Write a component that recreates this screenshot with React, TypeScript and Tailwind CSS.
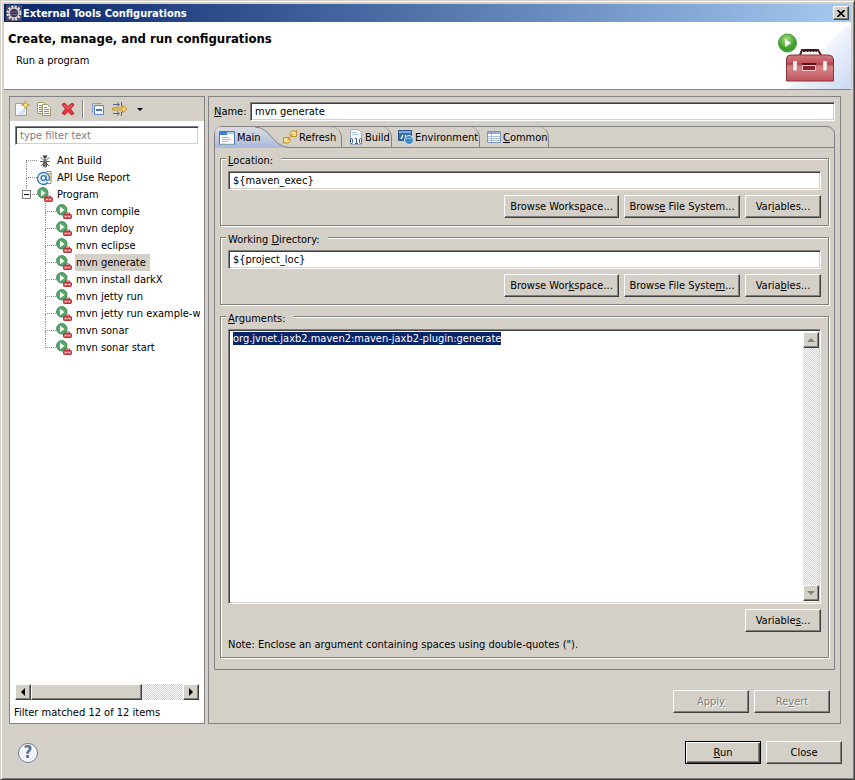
import { useEffect, useRef, type ReactNode } from "react";
import { clsx } from "clsx";

const raised = "border border-t-white border-l-white border-r-[#404040] border-b-[#404040] bg-[#d4d0c8] shadow-[inset_-1px_-1px_0_#808080]";
const sunken = "border border-t-[#808080] border-l-[#808080] border-r-white border-b-white bg-white shadow-[inset_1px_1px_0_#404040,inset_-1px_-1px_0_#d4d0c8]";
const track = "bg-[repeating-conic-gradient(#fff_0%_25%,#d4d0c8_0%_50%)] bg-[length:2px_2px]";

// Puts the underline under the letter at `at`, as the access key.
function Mnemonic({ text, at }: { text: string; at?: number }) {
  if (at === undefined) return <>{text}</>;
  return <>{text.slice(0, at)}<u className="underline-offset-1">{text[at]}</u>{text.slice(at + 1)}</>;
}

function Button({ text, at, className, primary, disabled }: { text: string; at?: number; className?: string; primary?: boolean; disabled?: boolean }) {
  return (
    <button
      type="button"
      disabled={disabled}
      className={clsx(
        "h-[23px] shrink-0 whitespace-nowrap",
        primary ? "border border-black bg-[#d4d0c8] shadow-[inset_1px_1px_0_#fff,inset_-1px_-1px_0_#404040,inset_-2px_-2px_0_#808080]" : raised,
        disabled && "text-[#808080] [text-shadow:1px_1px_0_#fff]",
        className ?? "w-[76px]",
      )}
    >
      <Mnemonic text={text} at={at} />
    </button>
  );
}

function Icon({ children, className }: { children: ReactNode; className?: string }) {
  return <svg aria-hidden="true" viewBox="0 0 16 16" className={clsx("size-4 shrink-0", className)}>{children}</svg>;
}

function NewIcon() {
  return (
    <Icon>
      <path d="M1.500 2.500h8l3 3v9h-11z" fill="#f4f8fd" stroke="#a89f7c" />
      <path d="M3 13.500h8V7z" fill="#d3e2f6" />
      <path d="M11.500 0l1 3 3 1-3 1-1 3-1-3-3-1 3-1z" fill="#fff0a0" stroke="#c99a35" />
    </Icon>
  );
}

function CopyIcon() {
  return (
    <Icon>
      <path d="M1.500 1.500h6l2 2v9h-8z" fill="#fff" stroke="#a39a63" />
      <path d="M3 4.500h3M3 6.500h3M3 8.500h3M3 10.500h3" stroke="#6e8fc0" />
      <path d="M6.500 3.500h5l3 3v8h-8z" fill="#fff" stroke="#a39a63" />
      <path d="M8 6.500h3M8 8.500h5M8 10.500h5M8 12.500h5" stroke="#6e8fc0" />
    </Icon>
  );
}

function DeleteIcon() {
  return (
    <Icon>
      <path d="M2 3.500 4.500 2 8 5.500 12 2l2 1.500L10.500 8l3.500 4.500-2.500 1.500L8 10.500 4.500 14 2 12l3.500-4z" fill="#e2343b" stroke="#c22630" strokeLinejoin="round" />
      <path d="M4 4l4 3.500L12 4" fill="none" stroke="#f27b7f" />
    </Icon>
  );
}

function CollapseIcon() {
  return (
    <Icon>
      <path d="M2.500 11.500v-9h9" fill="none" stroke="#7fa0d6" />
      <path d="M4.500 4.500h9v9h-9z" fill="#f3f8ff" stroke="#5c82c4" />
      <path d="M6 9h6" stroke="#1f4a94" strokeWidth="1.500" />
    </Icon>
  );
}

function FilterIcon() {
  return (
    <Icon>
      <path d="M1 3.500h6M1 12.500h6M5 1.500l2.500 2L5 5.500M5 10.500l2.500 2-2.500 2M9.500 1v4M9.500 11v4" fill="none" stroke="#5b6b85" />
      <path d="M.5 7h10V4.500L15 8l-4.500 3.500V9H.5z" fill="#fbe08a" stroke="#c08a1c" />
    </Icon>
  );
}

function AntIcon() {
  return (
    <Icon>
      <path d="M6 2l1 2M10 2 9 4M3.500 4.500l3 2.500M12.500 4.500l-3 2.500M3 8.500h10M4 13l3-3M12 13 9 10" fill="none" stroke="#666" />
      <circle cx="8" cy="4" r="1.800" fill="#4a4a4a" />
      <ellipse cx="8" cy="7.500" rx="1.500" ry="2" fill="#777" />
      <ellipse cx="8" cy="11.500" rx="2.200" ry="3" fill="#4a4a4a" />
      <path d="M7 11h2M7 13h2" stroke="#aaa" />
    </Icon>
  );
}

function ApiIcon() {
  return (
    <Icon>
      <path d="M9 1.500h5v12H9" fill="#fff" stroke="#7f93b2" />
      <path d="M11 4h4M11 7h4M11 10h4" stroke="#e0ae35" strokeWidth="1.500" />
      <circle cx="6.500" cy="8" r="6" fill="#e8f2fc" />
      <path d="M11 12.500A6 6 0 1 1 12.500 8c0 3-3.500 3-3.500 1V5.500" fill="none" stroke="#2f78bd" strokeWidth="1.300" />
      <circle cx="6.500" cy="8" r="2.400" fill="none" stroke="#2f78bd" strokeWidth="1.300" />
    </Icon>
  );
}

function ProgramIcon() {
  return (
    <Icon>
      <circle cx="5.800" cy="5.800" r="5.200" fill="#55a868" stroke="#3d8a55" />
      <path d="M4 2.800v6.400L8.500 6z" fill="#fff" />
      <path d="M9.500 10.500V9h4v1.500" fill="none" stroke="#a3343a" />
      <rect x="7.500" y="10.500" width="8" height="4" rx=".8" fill="#dd5a5f" stroke="#b0333a" />
      <path d="M9 12.500h1.500M12.500 12.500H14" stroke="#fff" />
    </Icon>
  );
}

function MainIcon() {
  return (
    <Icon>
      <path d="M.5 1.500h15v13H.5z" fill="#fff" stroke="#4778b0" />
      <path d="M1 2h7v3H1z" fill="#3e82cc" />
      <path d="M8 2h7v2H8z" fill="#a9cdf2" />
      <path d="M3 7.500h7M3 9.500h9M3 11.500h6" stroke="#9dbfdd" />
      <path d="M1 14h14" stroke="#b9d9b0" />
    </Icon>
  );
}

function RefreshIcon() {
  return (
    <Icon>
      <path d="M7.500 4.500 9 2.500q2-1.500 4 0l1.500-1v6h-6l2-2-1-.5-1 1.500z" fill="#fbe189" stroke="#c0902c" />
      <path d="M8.500 11.500 7 13.500q-2 1.500-4 0l-1.500 1v-6h6l-2 2 1 .5 1-1.500z" fill="#fbe189" stroke="#c0902c" />
    </Icon>
  );
}

function BuildIcon() {
  return (
    <Icon>
      <path d="M2.500.5h8l3 3v12h-11z" fill="#f7fafd" stroke="#9cadc2" />
      <path d="M4 3.500h5M4 5.500h7" stroke="#aec6e2" />
      <rect x="2.500" y="9.500" width="2" height="5" rx="1" fill="none" stroke="#31599b" />
      <path d="M7 9.500h1.500v5M7 14.500h3" fill="none" stroke="#31599b" />
      <rect x="11.500" y="9.500" width="2" height="5" rx="1" fill="none" stroke="#31599b" />
    </Icon>
  );
}

function EnvironmentIcon() {
  return (
    <Icon>
      <path d="M.5 1.500h13v10H.5z" fill="#3a6ea8" stroke="#28558c" />
      <path d="M1 2h12v2H1z" fill="#7ea9d6" />
      <path d="M3 10l2-4M7 6.500l2 1.500" stroke="#fff" strokeWidth="1.300" />
      <circle cx="11" cy="11" r="4.500" fill="#3f8ccb" stroke="#d9e8f5" />
      <path d="M8 10c2-2 3 1 6-1" fill="none" stroke="#8ec2e8" />
    </Icon>
  );
}

function CommonIcon() {
  return (
    <Icon>
      <path d="M1.500 2.500h13v11h-13z" fill="#fff" stroke="#7f93bd" />
      <path d="M2 3h12v2H2z" fill="#8fa9dc" />
      <path d="M2 7.500h12M2 9.500h12M2 11.500h12M5.500 5v8" stroke="#a9bbdd" />
    </Icon>
  );
}

function Toolbox() {
  return (
    <svg aria-hidden="true" viewBox="0 0 74 67" className="h-[67px] w-[74px]">
      <defs>
        <linearGradient id="sweep" x1="0" y1="0" x2="1" y2="1">
          <stop offset=".3" stopColor="#fff" />
          <stop offset="1" stopColor="#cbd9f3" />
        </linearGradient>
        <linearGradient id="box" x1="0" y1="0" x2="0" y2="1">
          <stop offset="0" stopColor="#cf7a7e" />
          <stop offset=".3" stopColor="#c2565d" />
          <stop offset=".5" stopColor="#d58286" />
          <stop offset="1" stopColor="#c0555c" />
        </linearGradient>
        <radialGradient id="go" cx=".45" cy=".3">
          <stop offset="0" stopColor="#a6e07c" />
          <stop offset="1" stopColor="#3f9d2c" />
        </radialGradient>
      </defs>
      <path d="M74 2C50 14 46 40 10 67h64z" fill="url(#sweep)" />
      <path d="M23 33l2-5h16l3 5" fill="none" stroke="#4a1a20" strokeWidth="2" />
      <path d="M26 28.500h14" stroke="#3a171c" strokeWidth="3" />
      <path d="M28 29.500h11" stroke="#a08084" strokeDasharray="2 1" />
      <path d="M9.500 37q0-4 4-4h38q4 0 5 4v22h-47z" fill="url(#box)" stroke="#8c2f37" />
      <path d="M10 42h46" stroke="#923941" />
      <path d="M25.500 43.500h13v5h-13z" fill="#8e2630" stroke="#f0c9cb" />
      <path d="M25 42h14" stroke="#5a141c" strokeWidth="2" />
      <path d="M16 39h4v9l-2 1-2-1zM46 39h4v9l-2 1-2-1z" fill="#f6f1ee" stroke="#b78b88" strokeWidth=".5" />
      <circle cx="10.500" cy="21" r="9" fill="url(#go)" stroke="#4c9a3b" />
      <path d="M8 17v8l6-4z" fill="#fff" />
    </svg>
  );
}

function Arrow({ d, className }: { d: string; className?: string }) {
  return <svg aria-hidden="true" viewBox="0 0 8 8" className={clsx("size-2", className)}><path d={d} fill="currentColor" /></svg>;
}

const dots = "border-dotted border-[#909090]";

function Guide({ first, last }: { first?: boolean; last?: boolean }) {
  return (
    <span aria-hidden="true" className="flex w-[11px] shrink-0 flex-col">
      <span className={clsx("h-[9px] border-b", dots, !first && "border-l")} />
      <span className={clsx("h-2", dots, !last && "border-l")} />
    </span>
  );
}

function TreeRow({ icon, label, first, last, selected, children }: { icon: ReactNode; label: string; first?: boolean; last?: boolean; selected?: boolean; children?: ReactNode }) {
  return (
    <div className="relative flex h-[17px] items-center">
      <Guide first={first} last={last} />
      {children}
      {icon}
      <span className={clsx("ml-[3px] h-[17px] px-px leading-[17px] whitespace-nowrap", selected && "bg-[#d4d0c8] pr-1")}>{label}</span>
    </div>
  );
}

const programs = [
  "mvn compile",
  "mvn deploy",
  "mvn eclipse",
  "mvn generate",
  "mvn install darkX",
  "mvn jetty run",
  "mvn jetty run example-we",
  "mvn sonar",
  "mvn sonar start",
];

function Sidebar() {
  return (
    <aside className="flex w-[196px] shrink-0 flex-col border border-[#848284] bg-white">
      <div className="flex h-6 items-center bg-[#d4d0c8] pl-1">
        <button type="button" aria-label="New"><NewIcon /></button>
        <button type="button" aria-label="Duplicate" className="ml-1.5"><CopyIcon /></button>
        <button type="button" aria-label="Delete" className="ml-2"><DeleteIcon /></button>
        <span className="mx-1.5 h-[18px] border-l border-l-[#808080] border-r border-r-white" />
        <button type="button" aria-label="Collapse all"><CollapseIcon /></button>
        <button type="button" aria-label="Filter" className="ml-1.5 flex items-center gap-2">
          <FilterIcon />
          <Arrow d="M1 3h6L4 6z" />
        </button>
      </div>
      <div className="px-[5px] pt-[5px]">
        <input aria-label="Filter" placeholder="type filter text" className={clsx("block h-[19px] w-full px-1 placeholder:text-[#808080]", sunken)} />
      </div>
      <ul className="mr-1 flex-1 overflow-hidden pt-[7px] pl-4">
        <li><TreeRow first icon={<AntIcon />} label="Ant Build" /></li>
        <li><TreeRow icon={<ApiIcon />} label="API Use Report" /></li>
        <li>
          <TreeRow last icon={<ProgramIcon />} label="Program">
            <button type="button" aria-label="Collapse Program" className="absolute top-1 -left-1 grid size-[9px] place-items-center border border-[#808080] bg-white">
              <span className="h-px w-[5px] bg-black" />
            </button>
          </TreeRow>
          <ul className="pl-[19px]">
            {programs.map((name, i) => (
              <li key={name}><TreeRow icon={<ProgramIcon />} label={name} last={i === programs.length - 1} selected={name === "mvn generate"} /></li>
            ))}
          </ul>
        </li>
      </ul>
      <div className={clsx("mx-[5px] flex h-4", track)}>
        <button type="button" aria-label="Scroll left" className={clsx("grid w-4 place-items-center", raised)}><Arrow d="M6 0v8L2 4z" /></button>
        <div className={clsx("w-[111px]", raised)} />
        <button type="button" aria-label="Scroll right" className={clsx("ml-auto grid w-4 place-items-center", raised)}><Arrow d="M2 0v8l4-4z" /></button>
      </div>
      <p className="px-1 pt-1.5 pb-1">Filter matched 12 of 12 items</p>
    </aside>
  );
}

function Tab({ icon, label, at, className }: { icon: ReactNode; label: string; at?: number; className: string }) {
  return (
    <button type="button" role="tab" className={clsx("flex h-5 items-center gap-px rounded-tr-[10px] border-r border-[#848284] pl-1.5 whitespace-nowrap", className)}>
      {icon}
      <span><Mnemonic text={label} at={at} /></span>
    </button>
  );
}

function Tabs() {
  return (
    <div role="tablist" className="flex h-[21px]">
      <button type="button" role="tab" aria-selected="true" className="relative flex w-[61px] items-center pl-1">
        <svg aria-hidden="true" viewBox="0 0 74 21" className="absolute top-0 left-0 h-[21px] w-[74px]">
          <defs>
            <linearGradient id="tab" x1="0" y1="0" x2="0" y2="1">
              <stop offset="0" stopColor="#dcdde0" />
              <stop offset="1" stopColor="#a9b9dc" />
            </linearGradient>
          </defs>
          <path d="M0 21V5Q1 0 6 0h34c15 0 18 20 34 21z" fill="url(#tab)" />
          <path d="M40 0c15 0 18 20 34 20.500" fill="none" stroke="#848284" />
        </svg>
        <span className="relative flex items-center gap-0.5"><MainIcon /> Main</span>
      </button>
      <div className="flex flex-1 items-start border-b border-[#848284]">
        <Tab icon={<RefreshIcon />} label="Refresh" className="relative w-[66px]" />
        <Tab icon={<BuildIcon />} label="Build" className="w-[50px]" />
        <Tab icon={<EnvironmentIcon />} label="Environment" className="w-[88px]" />
        <Tab icon={<CommonIcon />} label="Common" at={0} className="w-[69px]" />
      </div>
    </div>
  );
}

function Group({ label, at, className, children }: { label: string; at: number; className?: string; children: ReactNode }) {
  return (
    <fieldset className={clsx("border border-[#808080] px-[7px] pt-1 shadow-[1px_1px_0_#fff,inset_1px_1px_0_#fff]", className)}>
      <legend className="-ml-0.5 bg-[#d4d0c8] pt-1 pr-2 pl-0.5"><Mnemonic text={label} at={at} /></legend>
      {children}
    </fieldset>
  );
}

function PathGroup({ label, at, value, keys }: { label: string; at: number; value: string; keys: number[] }) {
  return (
    <Group label={label} at={at} className="pb-[7px]">
      <input aria-label={label} defaultValue={value} className={clsx("block h-[19px] w-full px-1", sunken)} />
      <div className="mt-[5px] flex justify-end gap-[5px]">
        <Button text="Browse Workspace..." at={keys[0]} className="w-[115px]" />
        <Button text="Browse File System..." at={keys[1]} className="w-[116px]" />
        <Button text="Variables..." at={keys[2]} />
      </div>
    </Group>
  );
}

function ArgumentsGroup() {
  const area = useRef<HTMLTextAreaElement>(null);

  useEffect(() => {
    area.current?.focus();
    area.current?.select();
  }, []);

  return (
    <Group label="Arguments:" at={0} className="flex flex-1 flex-col pb-1.5">
      <div className={clsx("flex flex-1 p-0.5 pr-px", sunken)}>
        <textarea
          ref={area}
          aria-label="Arguments"
          spellCheck={false}
          defaultValue="org.jvnet.jaxb2.maven2:maven-jaxb2-plugin:generate"
          className="min-h-40 flex-1 resize-none overflow-hidden px-0.5 outline-none selection:bg-[#0a246a] selection:text-white"
        />
        <div className={clsx("flex w-4 flex-col justify-between text-[#808080]", track)}>
          <button type="button" disabled aria-label="Scroll up" className={clsx("grid h-4 place-items-center", raised)}><Arrow d="M0 6h8L4 2z" /></button>
          <button type="button" disabled aria-label="Scroll down" className={clsx("grid h-4 place-items-center", raised)}><Arrow d="M0 2h8L4 6z" /></button>
        </div>
      </div>
      <div className="mt-[5px] flex justify-end"><Button text="Variables..." at={8} /></div>
      <p className="mt-1.5">Note: Enclose an argument containing spaces using double-quotes (").</p>
    </Group>
  );
}

export default function App() {
  return (
    <div className="flex min-h-screen flex-col border border-t-[#d4d0c8] border-r-[#404040] border-b-[#404040] border-l-[#d4d0c8] bg-[#d4d0c8] p-[3px] font-['DejaVu_Sans_Condensed','DejaVu_Sans',sans-serif] text-[11px] leading-[13px] text-black shadow-[inset_1px_1px_0_#fff,inset_-1px_-1px_0_#808080]">
      <div className="flex h-[18px] items-center bg-linear-to-r from-[#0a246a] to-[#a6caf0] pr-0.5 pl-0.5 font-bold text-white">
        <Icon className="mr-px">
          <path d="M0 0h16v16H0z" fill="#4b4768" />
          <circle cx="8" cy="8" r="6.500" fill="none" stroke="#e9e6e2" strokeWidth="2" strokeDasharray="2 1.400" />
          <circle cx="8" cy="8" r="5" fill="#3b3452" stroke="#d8d4d0" strokeWidth="1.500" />
          <path d="M4 7h8M4 9.500h8" stroke="#6d6684" />
        </Icon>
        <span>External Tools Configurations</span>
        <button type="button" aria-label="Close window" className={clsx("ml-auto grid h-3.5 w-4 place-items-center text-black", raised)}>
          <svg aria-hidden="true" viewBox="0 0 8 7" className="h-[7px] w-2"><path d="M.5 0l7 7M7.500 0l-7 7" stroke="currentColor" strokeWidth="1.600" /></svg>
        </button>
      </div>

      <header className="flex justify-between border-b border-[#848284] bg-white">
        <div className="pt-2 pl-1">
          <h1 className="text-[13px] leading-[17px] font-bold">Create, manage, and run configurations</h1>
          <p className="mt-[7px] pl-2">Run a program</p>
        </div>
        <Toolbox />
      </header>

      <div className="flex flex-1 gap-[3px] pt-1.5 pr-2.5 pl-[5px]">
        <Sidebar />
        <main className="flex min-w-0 flex-1 flex-col border border-[#848284] pt-[5px] pr-[5px] pb-2.5 pl-[5px]">
          <label className="flex items-center">
            <span className="w-9"><Mnemonic text="Name:" at={0} /></span>
            <input defaultValue="mvn generate" className={clsx("h-[19px] min-w-0 flex-1 px-1", sunken)} />
          </label>
          <section className="mt-[5px] flex flex-1 flex-col rounded-t-lg border border-[#848284]">
            <Tabs />
            <div className="flex flex-1 flex-col gap-[3px] px-[5px] pt-0.5 pb-[11px]">
              <PathGroup label="Location:" at={0} value="${maven_exec}" keys={[12, 5, 3]} />
              <PathGroup label="Working Directory:" at={8} value="${project_loc}" keys={[10, 17, 5]} />
              <ArgumentsGroup />
            </div>
          </section>
          <div className="flex justify-end gap-[5px] pt-5 pr-[5px]">
            <Button text="Apply" at={4} disabled />
            <Button text="Revert" at={2} disabled />
          </div>
        </main>
      </div>

      <footer className="flex items-center gap-[5px] pt-[17px] pr-[9px] pb-3 pl-3.5">
        <button type="button" aria-label="Help" className="mr-auto grid size-5 place-items-center rounded-full border border-[#6f8096] bg-[#f2f5f9] text-[17px] font-bold text-[#5b7191]">?</button>
        <Button text="Run" at={0} primary />
        <Button text="Close" />
      </footer>
    </div>
  );
}
